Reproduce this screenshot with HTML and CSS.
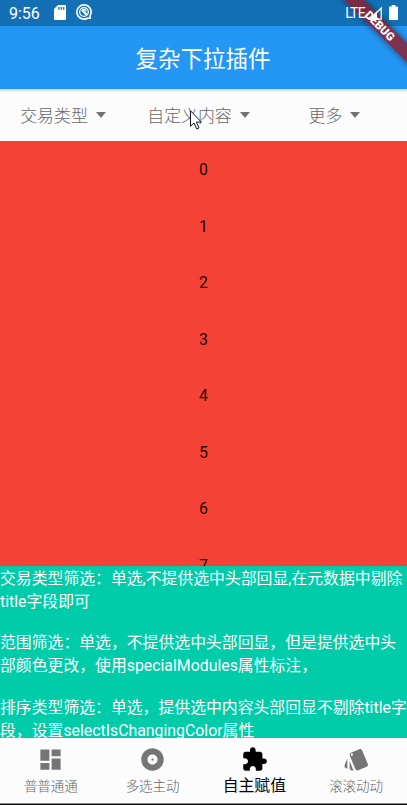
FILE: index.html
```html
<!DOCTYPE html>
<html lang="zh-CN">
<head>
<meta charset="utf-8">
<title>复杂下拉插件</title>
<link rel="stylesheet" href="styles.css">
</head>
<body>
<div class="screen">
  <header class="status">
    <span class="time">9:56</span>
    <svg class="sd" viewBox="0 0 12 15"><path fill="#fff" d="M4 0h6.7C11.5 0 12 .5 12 1.300v12.400c0 .8-.5 1.300-1.300 1.300H1.300C.5 15 0 14.500 0 13.700V4z"/><path stroke="#1470b5" stroke-width="1.300" d="M4.900 2v2.700M7.300 2v2.700M9.700 2v2.700"/></svg>
    <svg class="ring" viewBox="0 0 16 16" fill="none" stroke="#fff"><path stroke-width="1.600" d="M11.800 14A7.100 7.100 0 1 1 14 11.800M14 11.800l.2 2.400-2.400-.2"/><circle cx="8" cy="8" r="4.300" stroke-width="1.300"/><path stroke-width="2.200" d="M6 6l5 5"/><path stroke-width="1.500" d="M6.200 6.500a2.200 2.200 0 0 1 4 .8"/></svg>
    <span class="lte">LTE</span>
    <svg class="signal" viewBox="0 0 14 14"><path fill="#fff" d="M0 14L9 5v9z"/><path fill="none" stroke="#fff" stroke-width="1.300" d="M2 13.200L13.200 2v11.200z"/></svg>
    <svg class="battery" viewBox="0 0 9 15"><path fill="#fff" d="M2.700 0h3.600v1.500H8c.6 0 1 .4 1 1V14c0 .6-.4 1-1 1H1c-.6 0-1-.4-1-1V2.500c0-.6.4-1 1-1h1.700z"/></svg>
  </header>
  <h1 class="appbar">复杂下拉插件</h1>
  <div class="filters">
    <div class="filter">交易类型<i class="caret"></i></div>
    <div class="filter">自定义内容<i class="caret"></i></div>
    <div class="filter">更多<i class="caret"></i></div>
  </div>
  <div class="list">
    <div class="row">0</div><div class="row">1</div><div class="row">2</div><div class="row">3</div>
    <div class="row">4</div><div class="row">5</div><div class="row">6</div><div class="row">7</div>
  </div>
  <div class="notes">
    <p>交易类型筛选：单选,不提供选中头部回显,在元数据中剔除<br>title字段即可</p>
    <p>范围筛选：单选，不提供选中头部回显，但是提供选中头<br>部颜色更改，使用specialModules属性标注，</p>
    <p>排序类型筛选：单选，提供选中内容头部回显不剔除title字<br>段，设置selectIsChangingColor属性</p>
  </div>
  <nav class="tabs">
    <div class="tab"><svg viewBox="0 0 24 24"><path d="M3 13h8V3H3v10zm0 8h8v-6H3v6zm10 0h8V11h-8v10zm0-18v6h8V3h-8z"/></svg><span>普普通通</span></div>
    <div class="tab"><svg viewBox="0 0 24 24"><path d="M12 2C6.480 2 2 6.480 2 12s4.480 10 10 10 10-4.480 10-10S17.520 2 12 2zm0 14.500c-2.490 0-4.500-2.010-4.500-4.500S9.510 7.500 12 7.500s4.500 2.010 4.500 4.500-2.010 4.500-4.500 4.500zm0-5.500c-.55 0-1 .45-1 1s.45 1 1 1 1-.45 1-1-.45-1-1-1z"/></svg><span>多选主动</span></div>
    <div class="tab active"><svg viewBox="0 0 24 24"><path d="M20.500 11H19V7c0-1.100-.9-2-2-2h-4V3.500C13 2.120 11.880 1 10.500 1S8 2.120 8 3.500V5H4c-1.100 0-1.990.9-1.990 2v3.800H3.500c1.490 0 2.700 1.210 2.700 2.700s-1.210 2.700-2.700 2.700H2V20c0 1.100.9 2 2 2h3.800v-1.500c0-1.490 1.210-2.700 2.700-2.700 1.490 0 2.700 1.210 2.700 2.700V22H17c1.100 0 2-.9 2-2v-4h1.500c1.380 0 2.500-1.120 2.500-2.500S21.880 11 20.500 11z"/></svg><span>自主赋值</span></div>
    <div class="tab"><svg viewBox="0 0 24 24"><path d="M2.530 19.650l1.340.56v-9.030l-2.430 5.860c-.41 1.020.08 2.190 1.090 2.610zm19.500-3.700L17.070 3.980c-.31-.75-1.040-1.210-1.810-1.230-.26 0-.53.04-.79.15L7.100 5.950c-.75.31-1.210 1.030-1.230 1.800-.01.27.04.54.15.8l4.960 11.970c.31.76 1.050 1.220 1.830 1.230.26 0 .52-.05.77-.15l7.360-3.050c1.020-.42 1.510-1.590 1.090-2.600zM7.880 8.750c-.55 0-1-.45-1-1s.45-1 1-1 1 .45 1 1-.45 1-1 1zm-2 11c0 1.100.9 2 2 2h1.450l-3.450-8.340v6.340z"/></svg><span>滚滚动动</span></div>
  </nav>
  <div class="edge"></div>
  <div class="banner"><span>DEBUG</span></div>
  <svg class="cursor" viewBox="0 0 12 20"><path fill="#fff" stroke="#111827" stroke-width="1" d="M.5.8v15.500l3.500-3.400 2.700 6 2.300-1-2.600-5.800h5z"/></svg>
</div>
</body>
</html>
```
FILE: styles.css
```css
* { box-sizing: border-box; }
body { margin: 0; }
.screen {
  position: relative;
  width: 407px;
  height: 805px;
  overflow: hidden;
  display: flex;
  flex-direction: column;
  background: #fcfcfc;
  font-family: Roboto, "Noto Sans CJK SC", sans-serif;
}
.status {
  flex: none;
  height: 26px;
  padding: 0 9px;
  display: flex;
  align-items: center;
  background: #1470b5;
  color: #fff;
}
.time { width: 44px; font-size: 16px; }
.sd { width: 12px; height: 15px; margin-left: 1px; margin-top: -2px; }
.ring { width: 16px; height: 16px; margin-left: 10px; margin-top: -2px; }
.lte, .signal, .battery { position: relative; z-index: 2; margin-top: -1px; }
.lte { margin-left: auto; font-size: 14px; letter-spacing: -0.7px; }
.signal { width: 14px; height: 14px; margin-left: 3px; }
.battery { width: 9px; height: 15px; margin-left: 7px; }
.appbar {
  flex: none;
  height: 63px;
  margin: 0;
  padding-top: 1px;
  padding-right: 1px;
  background: #2496f3;
  color: #fff;
  font-size: 22.5px;
  font-weight: 400;
  line-height: 64px;
  text-align: center;
}
.filters {
  flex: none;
  height: 52px;
  display: grid;
  grid-template-columns: 126px 145px 127px;
  background: linear-gradient(#cbd2d8 0, #e9e9e9 2px, #fcfcfc 4px);
  color: #666;
  font-size: 16.9px;
  font-weight: 300;
}
.filter { display: flex; align-items: center; justify-content: center; padding-bottom: 1px; }
.caret {
  margin-left: 8px;
  border: 5.500px solid transparent;
  border-top: 6px solid #757575;
  border-bottom: 0;
}
.list { flex: none; height: 425px; padding-top: 1px; overflow: hidden; background: #f44336; }
.row {
  height: 56.530px;
  line-height: 56.530px;
  text-align: center;
  font-size: 15.830px;
  color: #210907;
}
.notes {
  flex: none;
  height: 172px;
  padding-top: 2px;
  overflow: hidden;
  background: #00ccaa;
  color: #fff;
  font-size: 15.850px;
  line-height: 22.900px;
  white-space: nowrap;
}
.notes p { margin: 0 0 18.500px; }
.tabs { flex: none; height: 65px; display: grid; grid-template-columns: repeat(4, 1fr); }
.tab {
  display: flex;
  flex-direction: column;
  align-items: center;
  padding-top: 8px;
  color: #757575;
  font-size: 13.500px;
}
.tab svg { flex: none; width: 27px; height: 27px; fill: currentColor; }
.tab span { margin-top: 3px; line-height: 20px; font-weight: 300; color: #666; }
.tab.active { color: #000; font-size: 15.800px; }
.tab.active span { margin-top: 2px; line-height: 22px; font-weight: 400; color: #000; }
.edge { flex: none; height: 2px; background: #000; border-top: 1px solid #8a8a8a; }
.banner {
  position: absolute;
  top: 19px;
  left: 330px;
  width: 100px;
  height: 13.500px;
  transform: rotate(45deg);
  background: rgba(146, 26, 40, 0.8);
  box-shadow: 0 0 6px rgba(0, 0, 0, 0.5);
  color: #fff;
  font-size: 11.500px;
  font-weight: 900;
  line-height: 14px;
  text-align: center;
}
.cursor { position: absolute; left: 190px; top: 110px; width: 12px; height: 20px; }
```
